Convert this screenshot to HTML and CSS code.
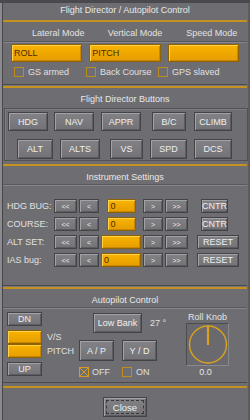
FILE: index.html
```html
<!DOCTYPE html>
<html>
<head>
<meta charset="utf-8">
<link rel="stylesheet" href="styles.css">
</head>
<body>
<div class="win">
  <div class="win-top"></div>
  <div class="title title-main">Flight Director / Autopilot Control</div>
  <div class="gold"></div>
  <div class="mode-heads"><span>Lateral Mode</span><span>Vertical Mode</span><span>Speed Mode</span></div>
  <div class="sep"></div>
  <div class="mode-fields">
    <div class="field">ROLL</div>
    <div class="field">PITCH</div>
    <div class="field"></div>
  </div>
  <div class="mode-checks">
    <div class="chk"><span class="box"></span>GS armed</div>
    <div class="chk"><span class="box"></span>Back Course</div>
    <div class="chk"><span class="box"></span>GPS slaved</div>
  </div>
  <div class="divider"><i class="d-dark"></i><i class="d-light"></i><i class="d-gold"></i></div>

  <div class="title">Flight Director Buttons</div>
  <div class="fd-box">
    <div class="fd-row fd-r1">
      <div class="btn">HDG</div><div class="btn">NAV</div><div class="btn">APPR</div><div class="btn">B/C</div><div class="btn">CLIMB</div>
    </div>
    <div class="fd-row fd-r2">
      <div class="btn">ALT</div><div class="btn">ALTS</div><div class="btn">VS</div><div class="btn">SPD</div><div class="btn">DCS</div>
    </div>
  </div>
  <div class="gold gold-fd"></div>

  <div class="title title-s">Instrument Settings</div>
  <div class="sep"></div>
  <div class="inst-grid">
    <div class="lbl">HDG BUG:</div>
    <div class="btn arr">&lt;&lt;</div><div class="btn arr">&lt;</div>
    <div class="field small">0</div>
    <div class="btn arr">&gt;</div><div class="btn arr">&gt;&gt;</div>
    <div class="btn cntr">CNTR</div>

    <div class="lbl">COURSE:</div>
    <div class="btn arr">&lt;&lt;</div><div class="btn arr">&lt;</div>
    <div class="field small">0</div>
    <div class="btn arr">&gt;</div><div class="btn arr">&gt;&gt;</div>
    <div class="btn cntr">CNTR</div>

    <div class="lbl">ALT SET:</div>
    <div class="btn arr">&lt;&lt;</div><div class="btn arr">&lt;</div>
    <div class="field wide"></div>
    <div class="btn arr">&gt;</div><div class="btn arr">&gt;&gt;</div>
    <div class="btn reset">RESET</div>

    <div class="lbl">IAS bug:</div>
    <div class="btn arr">&lt;&lt;</div><div class="btn arr">&lt;</div>
    <div class="field wide">0</div>
    <div class="btn arr">&gt;</div><div class="btn arr">&gt;&gt;</div>
    <div class="btn reset">RESET</div>
  </div>
  <div class="divider divider-inst"><i class="d-dark"></i><i class="d-light"></i><i class="d-gold"></i></div>

  <div class="title title-s">Autopilot Control</div>
  <div class="sep"></div>
  <div class="ap">
    <div class="ap-left">
      <div class="btn sm">DN</div>
      <div class="ap-modes">
        <div class="ap-stack"><div class="field ap-f"></div><div class="field ap-f"></div></div>
        <div class="ap-labels"><span>V/S</span><span>PITCH</span></div>
      </div>
      <div class="btn sm">UP</div>
    </div>
    <div class="ap-mid">
      <div class="ap-bank"><div class="btn bank">Low Bank</div><span class="deg">27 °</span></div>
      <div class="ap-btns"><div class="btn apb">A / P</div><div class="btn apb">Y / D</div></div>
      <div class="ap-checks">
        <div class="chk chk-ap"><svg class="box-x" width="10" height="10" viewBox="0 0 10 10"><rect x="0.5" y="0.5" width="9" height="9" fill="none" stroke="#d49c1c"/><path d="M1 1L9 9M9 1L1 9" stroke="#d49c1c" stroke-width="1"/></svg>OFF</div>
        <div class="chk chk-ap"><span class="box"></span>ON</div>
      </div>
    </div>
    <div class="ap-right">
      <div class="knob-lbl">Roll Knob</div>
      <div class="knob">
        <svg width="41" height="41" viewBox="0 0 41 41"><circle cx="21" cy="20.5" r="18.5" fill="none" stroke="#d9a21e" stroke-width="1.4"/><line x1="21" y1="2" x2="21" y2="21" stroke="#d9a21e" stroke-width="2.2"/></svg>
      </div>
      <div class="knob-val">0.0</div>
    </div>
  </div>
  <div class="divider divider-ap"><i class="d-dark"></i><i class="d-light"></i><i class="d-gold"></i></div>

  <div class="close-row"><div class="btn close"><span>Close</span></div></div>
</div>
</body>
</html>
```

FILE: styles.css
```css
* { box-sizing: border-box; }
html, body { margin: 0; padding: 0; }
body {
  background: #6e6e72;
  font-family: "Liberation Sans", Arial, sans-serif;
  font-size: 9px;
  color: #e4e4e4;
}
.win {
  width: 250px;
  height: 420px;
  background: #6e6e72;
  box-shadow: inset 2px 0 0 #8c8c90, inset 3px 0 0 #45454a, inset -2px 0 0 #5c5c60;
  overflow: hidden;
}
.win-top { height: 3px; background: #4a4a4e; }

.title {
  height: 19px;
  padding-top: 5px;
  line-height: 12px;
  text-align: center;
  color: #e8e8e8;
}
.title-main { height: 17px; padding-top: 3px; line-height: 14px; padding-top: 0; }
.title-s { height: 18px; }

.gold { height: 2px; margin: 0 3px; background: #c4921e; }
.gold-fd { margin-top: 3px; }

.sep { height: 2px; margin: 0 3px; border-top: 1px solid #5a5a5e; border-bottom: 1px solid #85858a; }

.mode-heads {
  display: grid;
  grid-template-columns: repeat(3, 1fr);
  height: 19px;
  padding: 6px 0 0 20px;
  line-height: 11px;
  text-align: center;
  color: #e2e2e2;
}

.field {
  background: linear-gradient(#f8b400, #e69c00);
  border: 1px solid #8e6200;
  box-shadow: inset 1px 1px 0 #ffd24a, inset -1px -1px 0 #c98600;
  color: #4a2a00;
  padding-left: 2px;
  white-space: nowrap;
}
.mode-fields {
  display: grid;
  grid-template-columns: repeat(3, 1fr);
  column-gap: 7px;
  padding: 0 11px;
  margin-top: 1px;
  height: 18px;
}
.mode-fields .field { line-height: 16px; }

.mode-checks {
  display: grid;
  grid-template-columns: 72px 72px 72px;
  padding-left: 14px;
  margin-top: 5px;
  height: 10px;
}
.chk { display: flex; align-items: center; height: 10px; line-height: 10px; color: #e0e0e0; white-space: nowrap; }
.box { width: 10px; height: 10px; border: 1px solid #c08c22; margin-right: 4px; flex: none; }
.box-x { margin-right: 3px; flex: none; }

.divider { margin-top: 7px; }
.divider i { display: block; margin: 0 3px; }
.d-dark { height: 1px; background: #4a4a4e; }
.d-light { height: 1px; background: #78787c; }
.d-gold { height: 2px; background: #c4921e; }
.divider-inst { margin-top: 18px; }
.divider-ap { margin-top: 3px; }
.divider-ap .d-light { height: 3px; background: #6e6e72; }

.btn {
  background: linear-gradient(#828286, #737377);
  border: 1px solid #444448;
  box-shadow: inset 1px 1px 0 #a2a2a6, inset -1px -1px 0 #5c5c60;
  color: #efefef;
  text-align: center;
  white-space: nowrap;
  display: flex;
  align-items: center;
  justify-content: center;
}

.fd-box {
  margin: 1px 2px 0 4px;
  height: 53px;
  border: 1px solid #515155;
  box-shadow: inset 1px 1px 0 #7e7e82;
  padding: 3px 0 1px;
}
.fd-row { display: flex; }
.fd-r1 { height: 19px; padding-left: 3px; margin-bottom: 8px; }
.fd-r2 { height: 20px; padding-left: 12px; }
.fd-r1 .btn:nth-child(1) { width: 40px; }
.fd-r1 .btn:nth-child(2) { width: 40px; margin-left: 6px; }
.fd-r1 .btn:nth-child(3) { width: 40px; margin-left: 7px; }
.fd-r1 .btn:nth-child(4) { width: 34px; margin-left: 11px; }
.fd-r1 .btn:nth-child(5) { width: 38px; margin-left: 8px; }
.fd-r2 .btn:nth-child(1) { width: 36px; }
.fd-r2 .btn:nth-child(2) { width: 40px; margin-left: 7px; }
.fd-r2 .btn:nth-child(3) { width: 33px; margin-left: 10px; }
.fd-r2 .btn:nth-child(4) { width: 37px; margin-left: 7px; }
.fd-r2 .btn:nth-child(5) { width: 38px; margin-left: 7px; }

.inst-grid {
  display: grid;
  grid-template-columns: 45px 23px 20px 40px 20px 23px 55px;
  grid-auto-rows: 14px;
  column-gap: 2px;
  row-gap: 4px;
  padding-left: 7px;
  margin-top: 13px;
}
.lbl { line-height: 14px; color: #e0e0e0; white-space: nowrap; }
.arr { font-size: 7px; }
.inst-grid .field { line-height: 12px; padding-left: 3px; }
.field.small { width: 29px; justify-self: center; }
.field.wide { width: 40px; padding-left: 2px; }
.cntr { width: 27px; margin-left: 11px; }
.reset { width: 42px; margin-left: 7px; }

.ap { display: flex; padding-top: 3px; height: 70px; }
.ap-left { width: 79px; padding-left: 7px; display: flex; flex-direction: column; }
.btn.sm { width: 35px; height: 14px; }
.ap-modes { display: flex; margin: 4px 0; }
.ap-stack { width: 35px; display: flex; flex-direction: column; }
.ap-f { height: 14px; }
.ap-labels { display: flex; flex-direction: column; padding-left: 5px; line-height: 14px; color: #e0e0e0; }
.ap-mid { width: 107px; display: flex; flex-direction: column; }
.ap-bank { display: flex; align-items: center; margin-top: 1px; padding-left: 14px; height: 20px; }
.btn.bank { width: 49px; height: 20px; }
.deg { margin-left: 8px; color: #e0e0e0; }
.ap-btns { display: flex; margin-top: 7px; height: 21px; }
.btn.apb { width: 35px; height: 21px; margin-right: 8px; }
.ap-checks { display: flex; margin-top: 6px; }
.chk-ap { width: 43px; }
.ap-right { width: 43px; display: flex; flex-direction: column; align-items: center; }
.knob-lbl { height: 11px; line-height: 11px; color: #e4e4e4; white-space: nowrap; }
.knob {
  width: 43px;
  height: 43px;
  border: 1px solid;
  border-color: #4c4c50 #8a8a8e #8a8a8e #4c4c50;
  background: #6a6a6e;
}
.knob svg { display: block; }
.knob-val { height: 10px; line-height: 10px; margin-top: 1px; color: #e4e4e4; padding-right: 4px; }

.close-row { display: flex; justify-content: center; margin-top: 9px; }
.btn.close { width: 44px; height: 20px; padding: 2px; font-size: 9.5px; }
.btn.close span {
  flex: 1;
  align-self: stretch;
  border: 1px dashed #38383c;
  display: flex;
  align-items: center;
  justify-content: center;
}
```
